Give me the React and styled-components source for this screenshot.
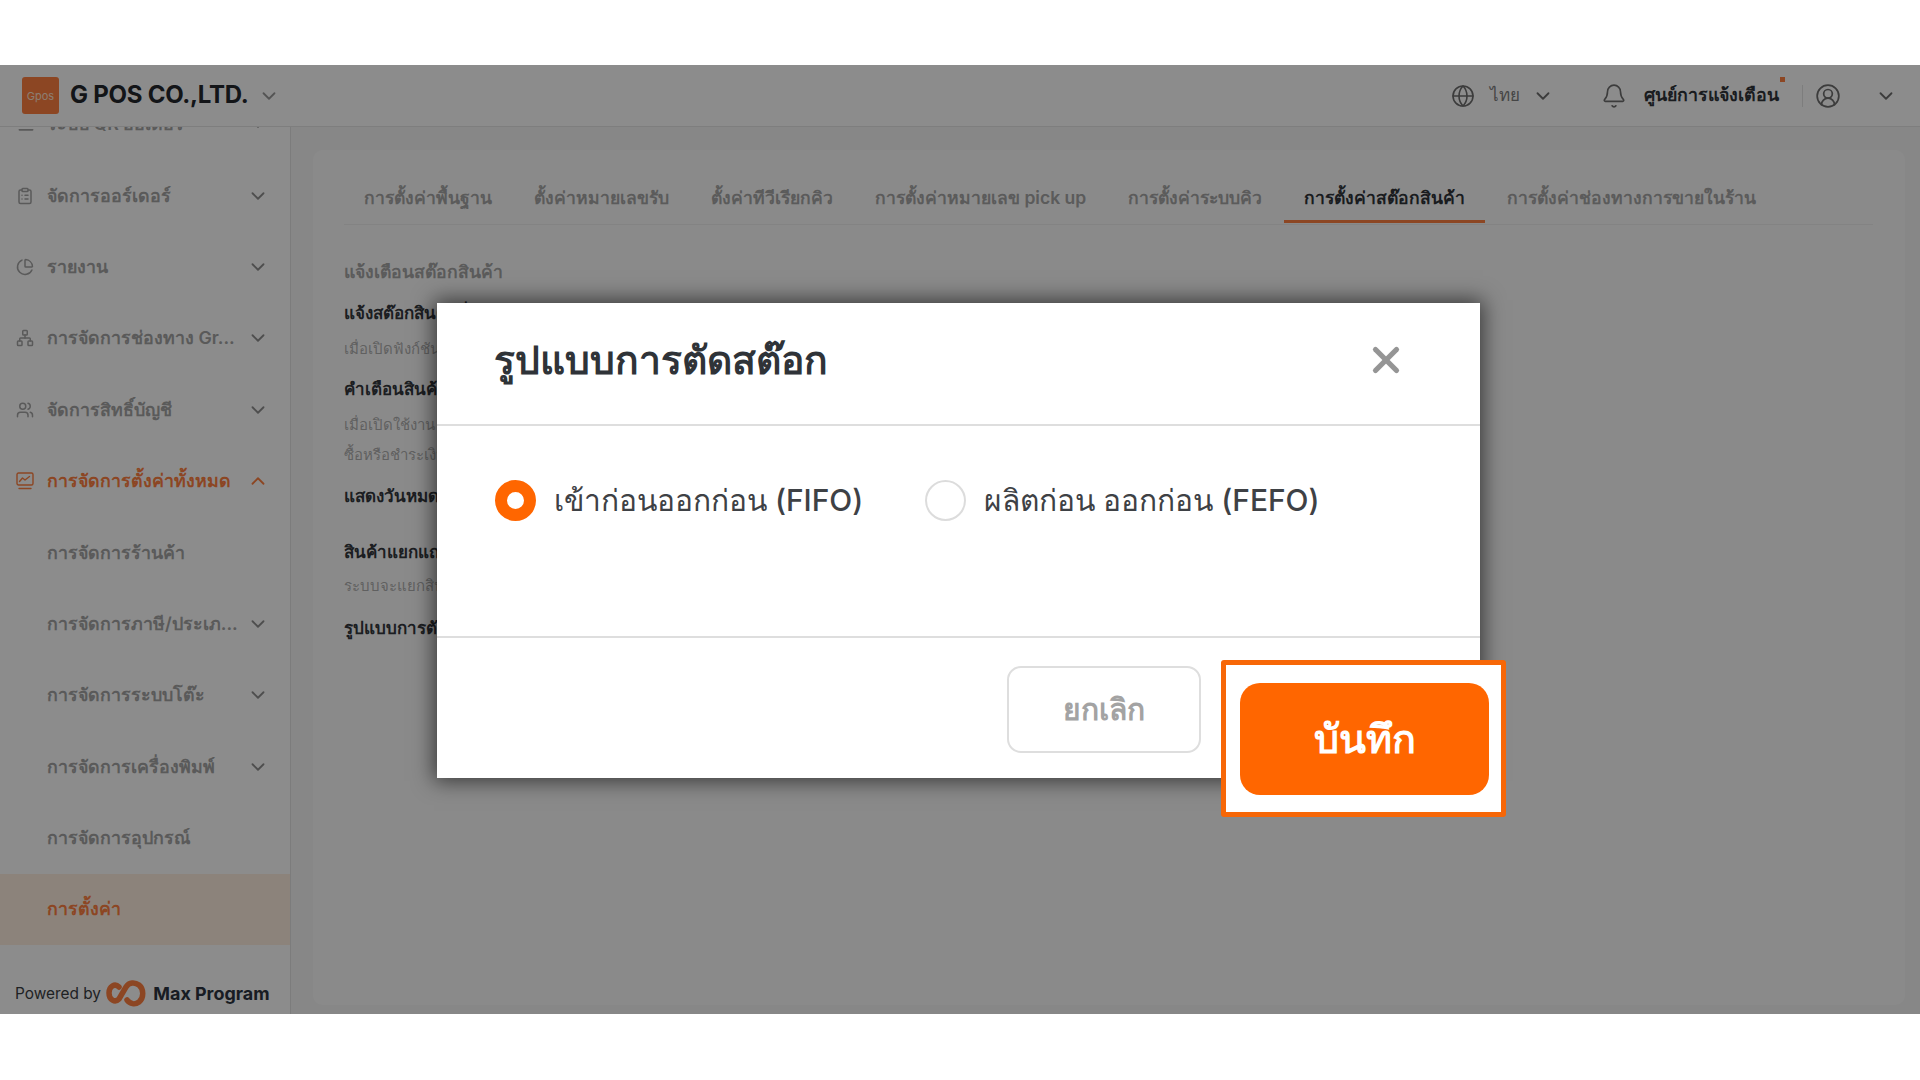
import React from 'react';
import styled, { createGlobalStyle } from 'styled-components';
import {
  Bell,
  ChartPie,
  ChevronDown,
  ChevronUp,
  CircleUserRound,
  ClipboardList,
  Globe,
  Menu,
  Network,
  Users,
  X,
} from 'lucide-react';

const accent = '#ff8040';

const GlobalStyle = createGlobalStyle`
  * { box-sizing: border-box; }
  html, body { margin: 0; padding: 0; background: #fff; }
  body { font-family: Inter, "Noto Sans", "Liberation Sans", sans-serif; color: #23272c; }
`;

const Shell = styled.div`
  position: relative;
  margin-top: 65px;
  height: 949px;
  display: flex;
  flex-direction: column;
  overflow: hidden;
  background: #f6f6f6;
`;

const Header = styled.header`
  height: 62px;
  flex: none;
  display: flex;
  align-items: center;
  padding: 0 23px 0 22px;
  background: #fff;
  border-bottom: 1px solid #e6e6e6;
  position: relative;
  z-index: 1;
`;

const BrandLogo = styled.div`
  width: 37px;
  height: 37px;
  border-radius: 3px;
  background: ${accent};
  color: #ffe3d0;
  font-size: 11px;
  display: flex;
  align-items: center;
  justify-content: center;
`;

const BrandName = styled.div`
  margin: 0 9px 2px 11px;
  font-size: 24px;
  font-weight: 700;
  letter-spacing: -0.25px;
`;

const HeaderRight = styled.div`
  margin-left: auto;
  display: flex;
  align-items: center;
  color: #6e6e6e;
`;

const Lang = styled.span`
  margin: 0 12px 2px 15px;
  font-size: 17px;
  font-weight: 500;
  color: #808080;
`;

const BellWrap = styled.span`
  display: flex;
  margin: 0 17px 0 47px;
`;

const NoticeText = styled.span`
  position: relative;
  font-size: 17.8px;
  font-weight: 600;
  margin-bottom: 2px;
  color: #30343a;
  &::after {
    content: '';
    position: absolute;
    right: -6px;
    top: -4px;
    width: 5px;
    height: 5px;
    background: ${accent};
  }
`;

const Separator = styled.span`
  width: 1px;
  height: 22px;
  margin: 0 12px 0 23px;
  background: #e4e4e4;
`;

const UserGap = styled.span`
  display: flex;
  margin-right: 34px;
`;

const Body = styled.div`
  flex: 1;
  min-height: 0;
  display: flex;
`;

const Sidebar = styled.aside`
  width: 291px;
  flex: none;
  display: flex;
  flex-direction: column;
  background: #fff;
  border-right: 1px solid #e2e2e2;
`;

const MenuList = styled.nav`
  flex: 1;
  min-height: 0;
  overflow: hidden;
`;

const MenuScroller = styled.div`
  margin-top: -38.5px;
`;

const MenuRow = styled.div`
  height: 71.4px;
  display: flex;
  align-items: center;
  padding: 0 21px 0 16px;
  font-size: 17.8px;
  color: ${(p) => (p.$on ? accent : '#a4a4a4')};
  background: ${(p) => (p.$current ? '#ffeee0' : 'transparent')};
`;

const MenuIcon = styled.span`
  width: 31px;
  flex: none;
  display: flex;
`;

const MenuLabel = styled.span`
  flex: 1;
  padding-left: ${(p) => (p.$sub ? '31px' : '0')};
  white-space: nowrap;
  font-weight: ${(p) => (p.$on ? 700 : 600)};
`;

const PoweredRow = styled.div`
  height: 69px;
  flex: none;
  display: flex;
  align-items: center;
  padding: 27px 0 0 15px;
  color: #3a3d42;
  font-size: 15.4px;
`;

const LogoWrap = styled.span`
  display: flex;
  margin-left: 1px;
`;

const MaxName = styled.span`
  margin-left: 7px;
  font-weight: 700;
  font-size: 17.9px;
  color: #2d3440;
`;

const Main = styled.main`
  flex: 1;
  min-width: 0;
  padding: 23px 15px 9px 22px;
`;

const Panel = styled.section`
  height: 100%;
  border-radius: 10px;
  background: #fcfcfc;
  padding: 24px 32px 0 31px;
`;

const Tabs = styled.div`
  display: flex;
  gap: 2px;
  height: 51px;
  border-bottom: 1px solid #eee;
`;

const Tab = styled.div`
  height: 49px;
  padding: 2px 20px 0;
  display: flex;
  align-items: center;
  font-size: 17.55px;
  font-weight: 600;
  white-space: nowrap;
  color: ${(p) => (p.$on ? '#30343a' : '#a6a6a6')};
  border-bottom: 3px solid ${(p) => (p.$on ? accent : 'transparent')};
`;

const Settings = styled.div`
  display: flex;
  flex-direction: column;
  padding-top: 34px;
`;

const SectionHead = styled.div`
  font-size: 17.6px;
  font-weight: 600;
  line-height: 26px;
  color: #a6a6a6;
  margin-bottom: 15px;
`;

const SettingTitle = styled.div`
  font-size: 17px;
  line-height: 26px;
  font-weight: 700;
  color: #33373c;
  margin-bottom: ${(p) => p.$gap || 8}px;
`;

const SettingNote = styled.div`
  font-size: 15px;
  font-weight: 500;
  line-height: 30px;
  color: #b0b0b0;
  margin-bottom: ${(p) => p.$gap || 0}px;
`;

const Overlay = styled.div`
  position: absolute;
  inset: 0;
  z-index: 2;
  padding: 238px 0 0 437px;
  background: rgba(0, 0, 0, 0.45);
`;

const Modal = styled.div`
  position: relative;
  width: 1043px;
  height: 475px;
  display: flex;
  flex-direction: column;
  background: #fff;
  box-shadow: 0 0 20px 3px rgba(0, 0, 0, 0.6);
`;

const ModalHead = styled.div`
  height: 123px;
  flex: none;
  display: flex;
  align-items: center;
  justify-content: space-between;
  padding: 0 73px 7px 57px;
  border-bottom: 2px solid #dedede;
`;

const ModalTitle = styled.h2`
  margin: 0;
  font-size: 39px;
  font-weight: 600;
  color: #2f3338;
`;

const CloseIcon = styled(X)`
  display: block;
  color: #959595;
`;

const ModalBody = styled.div`
  height: 212px;
  flex: none;
  display: flex;
  align-items: flex-start;
  gap: 62px;
  padding: 51px 0 0 58px;
  border-bottom: 2px solid #dedede;
`;

const RadioOption = styled.label`
  display: flex;
  align-items: center;
  gap: 18px;
  font-size: 29.9px;
  font-weight: 500;
  color: #3e4145;
`;

const RadioMark = styled.span`
  width: 41px;
  height: 41px;
  border-radius: 50%;
  flex: none;
  background: #fff;
  border: ${(p) => (p.$on ? '12.5px solid #ff6600' : '2px solid #dcdcdc')};
`;

const ModalFoot = styled.div`
  flex: 1;
  padding: 28px 0 0 570px;
`;

const CancelButton = styled.button`
  width: 194px;
  height: 87px;
  border: 2px solid #dedede;
  border-radius: 14px;
  background: #fff;
  font-family: inherit;
  font-size: 30px;
  font-weight: 600;
  color: #a3a3a3;
`;

const Highlight = styled.div`
  position: absolute;
  left: 784px;
  top: 357px;
  width: 285px;
  height: 157px;
  display: flex;
  align-items: center;
  justify-content: center;
  padding-left: 2px;
  background: #fff;
  border: 5px solid #f76707;
  border-radius: 3px;
`;

const SaveButton = styled.button`
  width: 249px;
  height: 112px;
  border: 0;
  border-radius: 20px;
  background: #ff6600;
  font-family: inherit;
  font-size: 39.5px;
  font-weight: 700;
  color: #fff;
`;

const MonitorIcon = () => (
  <svg width="18" height="18" viewBox="0 0 18 18" fill="none" stroke="currentColor" strokeWidth="1.4" strokeLinecap="round" strokeLinejoin="round">
    <rect x="1" y="1" width="16" height="12" rx="1.5" />
    <path d="M3.5 9.5 L6.5 6 L9 8 L13.5 4.5" />
    <path d="M3 16.5 H15" />
  </svg>
);

const MaxLogo = () => (
  <svg width="40" height="28" viewBox="0 0 40 28" fill="none" stroke={accent} strokeWidth="5.5" strokeLinecap="round">
    <path d="M13 8 C9 4 3 7 3 14 C3 21 9 24 13 20 L20 8 C23 3 29 3 33 6 C38 10 38 19 33 23 C29 26 24 25 21 21" />
  </svg>
);

const menu = [
  { label: 'ระบบ QR ออเดอร์', icon: <Menu size={20} />, arrow: true },
  { label: 'จัดการออร์เดอร์', icon: <ClipboardList size={18} />, arrow: true },
  { label: 'รายงาน', icon: <ChartPie size={18} />, arrow: true },
  { label: 'การจัดการช่องทาง Gr...', icon: <Network size={18} />, arrow: true },
  { label: 'จัดการสิทธิ์บัญชี', icon: <Users size={18} />, arrow: true },
  { label: 'การจัดการตั้งค่าทั้งหมด', icon: <MonitorIcon />, on: true, open: true },
  { label: 'การจัดการร้านค้า', sub: true },
  { label: 'การจัดการภาษี/ประเภ...', sub: true, arrow: true },
  { label: 'การจัดการระบบโต๊ะ', sub: true, arrow: true },
  { label: 'การจัดการเครื่องพิมพ์', sub: true, arrow: true },
  { label: 'การจัดการอุปกรณ์', sub: true },
  { label: 'การตั้งค่า', sub: true, on: true, current: true },
];

const tabs = [
  'การตั้งค่าพื้นฐาน',
  'ตั้งค่าหมายเลขรับ',
  'ตั้งค่าทีวีเรียกคิว',
  'การตั้งค่าหมายเลข pick up',
  'การตั้งค่าระบบคิว',
  'การตั้งค่าสต๊อกสินค้า',
  'การตั้งค่าช่องทางการขายในร้าน',
];

const App = () => {
  return (
    <>
      <GlobalStyle />
      <Shell>
        <Header>
          <BrandLogo>Gpos</BrandLogo>
          <BrandName>G POS CO.,LTD.</BrandName>
          <ChevronDown size={22} color="#9a9a9a" />
          <HeaderRight>
            <Globe size={24} strokeWidth={1.6} />
            <Lang>ไทย</Lang>
            <ChevronDown size={22} />
            <BellWrap><Bell size={26} strokeWidth={1.5} /></BellWrap>
            <NoticeText>ศูนย์การแจ้งเตือน</NoticeText>
            <Separator />
            <UserGap><CircleUserRound size={26} strokeWidth={1.6} /></UserGap>
            <ChevronDown size={22} />
          </HeaderRight>
        </Header>
        <Body>
          <Sidebar>
            <MenuList>
              <MenuScroller>
                {menu.map((item) => (
                  <MenuRow key={item.label} $on={item.on} $current={item.current}>
                    {item.icon && <MenuIcon>{item.icon}</MenuIcon>}
                    <MenuLabel $sub={item.sub} $on={item.on}>{item.label}</MenuLabel>
                    {item.arrow && <ChevronDown size={22} color="#8f8f8f" />}
                    {item.open && <ChevronUp size={22} />}
                  </MenuRow>
                ))}
              </MenuScroller>
            </MenuList>
            <PoweredRow>
              Powered by&nbsp;
              <LogoWrap><MaxLogo /></LogoWrap>
              <MaxName>Max Program</MaxName>
            </PoweredRow>
          </Sidebar>
          <Main>
            <Panel>
              <Tabs>
                {tabs.map((t, i) => (
                  <Tab key={t} $on={i === 5}>{t}</Tab>
                ))}
              </Tabs>
              <Settings>
                <SectionHead>แจ้งเตือนสต๊อกสินค้า</SectionHead>
                <SettingTitle>แจ้งสต๊อกสินค้าต่ำ</SettingTitle>
                <SettingNote $gap={12}>เมื่อเปิดฟังก์ชันนี้</SettingNote>
                <SettingTitle>คำเตือนสินค้าหมด</SettingTitle>
                <SettingNote>เมื่อเปิดใช้งาน</SettingNote>
                <SettingNote $gap={13}>ซื้อหรือชำระเงิน</SettingNote>
                <SettingTitle $gap={30}>แสดงวันหมดอายุ</SettingTitle>
                <SettingTitle $gap={6}>สินค้าแยกแถว</SettingTitle>
                <SettingNote $gap={14}>ระบบจะแยกสินค้า</SettingNote>
                <SettingTitle>รูปแบบการตัดสต๊อก</SettingTitle>
              </Settings>
            </Panel>
          </Main>
        </Body>
        <Overlay>
          <Modal>
            <ModalHead>
              <ModalTitle>รูปแบบการตัดสต๊อก</ModalTitle>
              <CloseIcon size={42} strokeWidth={3} />
            </ModalHead>
            <ModalBody>
              <RadioOption>
                <RadioMark $on />
                เข้าก่อนออกก่อน (FIFO)
              </RadioOption>
              <RadioOption>
                <RadioMark />
                ผลิตก่อน ออกก่อน (FEFO)
              </RadioOption>
            </ModalBody>
            <ModalFoot>
              <CancelButton>ยกเลิก</CancelButton>
            </ModalFoot>
            <Highlight>
              <SaveButton>บันทึก</SaveButton>
            </Highlight>
          </Modal>
        </Overlay>
      </Shell>
    </>
  );
};

export default App;
